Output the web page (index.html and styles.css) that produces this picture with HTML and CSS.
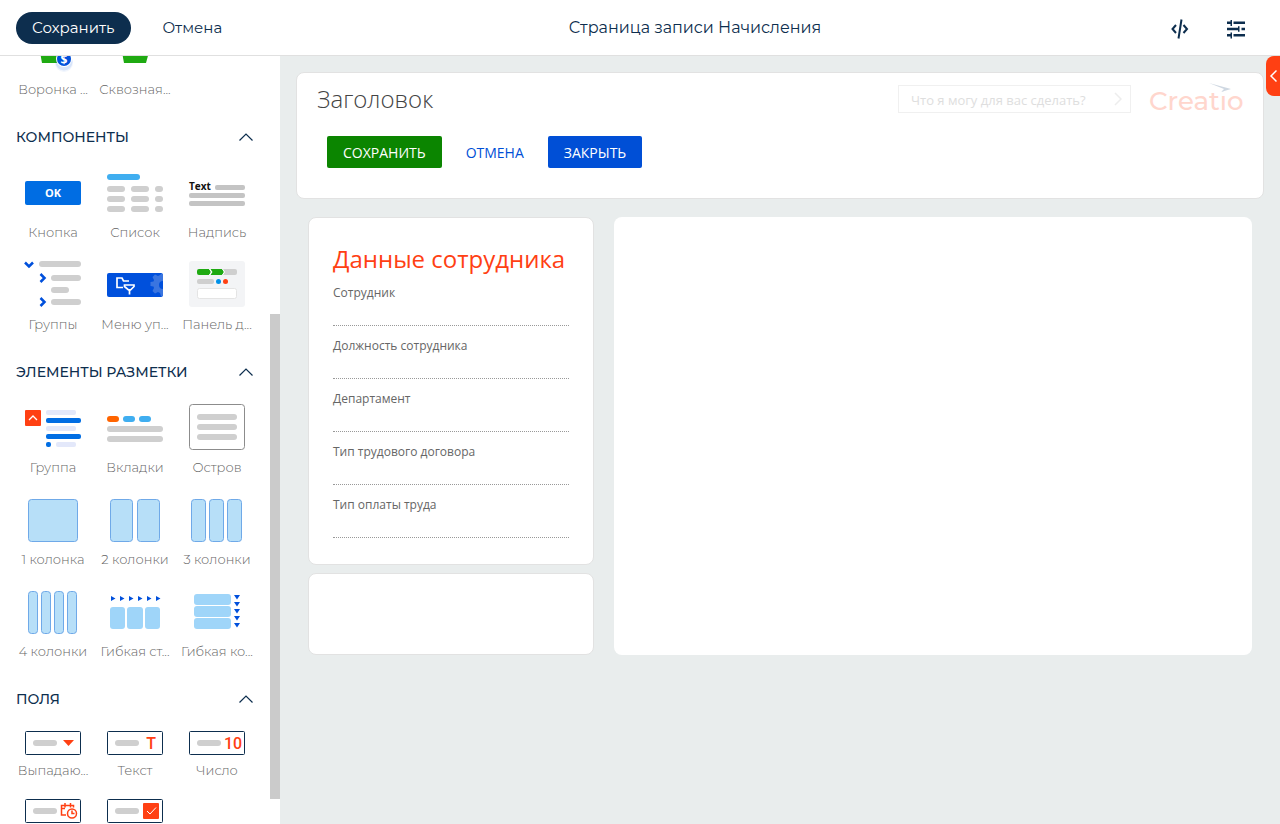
FILE: index.html
```html
<!DOCTYPE html>
<html lang="ru">
<head>
<meta charset="utf-8">
<title>Страница записи Начисления</title>
<link rel="stylesheet" href="styles.css">
</head>
<body>
<header class="topbar">
  <button class="btn-save" type="button">Сохранить</button>
  <button class="btn-cancel" type="button">Отмена</button>
  <h1 class="topbar-title">Страница записи Начисления</h1>
  <div class="topbar-tools">
    <button class="tool" type="button" aria-label="Исходный код">
      <svg width="20" height="22" viewBox="0 0 20 22" fill="none" stroke="#0d2e4e" stroke-width="2"><path d="M6 8 2.500 12 6 16M13.500 8l3.500 4L13.500 16M11.500 2.500l-3 19"/></svg>
    </button>
    <button class="tool" type="button" aria-label="Настройки">
      <svg width="20" height="22" viewBox="0 0 20 22" fill="#0d2e4e"><path d="M1 4.500h3.500V3H6v6H4.500V7H1zM7.500 4.500H19V7H7.500zM1 10.800h11V9.200h1.500v5.600h-1.500v-1.500H1zM15.500 10.800H19v2.500h-3.500zM1 17h3.500v-1.500H6v6H4.500v-2H1zM7.500 17H19v2.500H7.500z"/></svg>
    </button>
  </div>
</header>
<div class="workspace">
  <aside class="palette">
    <div class="tiles">
      <div class="tile"><svg class="icon-cut" viewBox="0 30 56 16"><path d="M15 26h27l-3 11H17z" fill="#1faa12"/><circle cx="39" cy="37" r="9" fill="#0050dc" opacity=".06"/><circle cx="39" cy="36" r="8.500" fill="#0050dc" opacity=".1"/><circle cx="39" cy="33" r="8" fill="#fff"/><circle cx="39" cy="33" r="7" fill="#0050dc"/><text class="g-dollar" x="39" y="38">$</text></svg><span class="tile-label">Воронка ...</span></div>
      <div class="tile"><svg class="icon-cut" viewBox="0 30 56 16"><path d="M15 26h27l-3 11H17z" fill="#1faa12"/></svg><span class="tile-label">Сквозная...</span></div>
    </div>

    <button class="section" type="button">КОМПОНЕНТЫ<svg class="chev" viewBox="0 0 14 8"><path d="M.5 7.500 7 1l6.500 6.500"/></svg></button>
    <div class="tiles">
      <div class="tile"><svg class="icon" viewBox="0 0 56 46"><rect y="12" width="56" height="24" rx="2" fill="#006de3"/><text class="g-ok" x="28" y="28">OK</text></svg><span class="tile-label">Кнопка</span></div>
      <div class="tile"><svg class="icon" viewBox="0 0 56 46" fill="#cfcfcf"><rect y="5" width="33" height="6" rx="3" fill="#40aef0"/><rect y="17" width="18" height="6" rx="3"/><rect x="24" y="17" width="18" height="6" rx="3"/><rect x="48" y="17" width="8" height="6" rx="3"/><rect y="27" width="18" height="6" rx="3"/><rect x="24" y="27" width="18" height="6" rx="3"/><rect x="48" y="27" width="8" height="6" rx="3"/><rect y="37" width="18" height="6" rx="3"/><rect x="24" y="37" width="18" height="6" rx="3"/><rect x="48" y="37" width="8" height="6" rx="3"/></svg><span class="tile-label">Список</span></div>
      <div class="tile"><svg class="icon" viewBox="0 0 56 46" fill="#c4c4c4"><text class="g-text" x="0" y="21">Text</text><rect x="26" y="16" width="30" height="5" rx="2"/><rect y="24" width="56" height="5" rx="2"/><rect y="32" width="56" height="5" rx="2"/></svg><span class="tile-label">Надпись</span></div>
      <div class="tile"><svg class="icon" viewBox="0 0 56 46" fill="#cfcfcf"><rect x="14" width="42" height="6" rx="3"/><rect x="26" y="14" width="30" height="6" rx="3"/><rect x="26" y="26" width="18" height="6" rx="3"/><rect x="26" y="38" width="30" height="6" rx="3"/><path d="M0 1.500 4 5.500 8 1.500M15.500 13l4 4-4 4M15.500 37l4 4-4 4" fill="none" stroke="#0050dc" stroke-width="2.500"/></svg><span class="tile-label">Группы</span></div>
      <div class="tile"><svg class="icon" viewBox="0 0 56 46"><rect y="12" width="56" height="24" rx="2" fill="#0050dc"/><path d="M54 13h2v7a4 4 0 0 0 0 8v7h-2l-1-3-2-1-3 1.500-2.500-2.500 1.500-3-.5-1.500-3-.5v-4l3-.5.5-1.500-1.500-3 2.500-2.500 3 1.500 2-1z" fill="#3a75e0"/><path d="M16 26.500h-6v-9.500h5l1.500 3h5.500M17.500 24h9.500v1.500l-3.500 3.500h-2L17.500 25.500zM22.500 28v5.500" fill="none" stroke="#fff" stroke-width="1.700"/></svg><span class="tile-label">Меню уп...</span></div>
      <div class="tile"><svg class="icon" viewBox="0 0 56 46"><rect width="56" height="46" rx="3" fill="#f3f4f6"/><path d="M32 8h14a2 2 0 0 1 2 2v2a2 2 0 0 1-2 2H32z" fill="#cfcfcf"/><path d="M10 8h10l2 3-2 3H10a2 2 0 0 1-2-2v-2a2 2 0 0 1 2-2zM21.500 8H33l2 3-2 3H21.500l2-3z" fill="#1faa12"/><path d="m20.500 8 2 3-2 3M33.500 8l2 3-2 3" fill="none" stroke="#fff"/><rect x="8" y="18" width="17" height="5" rx="2" fill="#cfcfcf"/><circle cx="29.500" cy="20.500" r="2.500" fill="#0091e8"/><circle cx="36.500" cy="20.500" r="2.500" fill="#ff4013"/><rect x="8.500" y="27.500" width="39" height="10" rx="2" fill="#fff" stroke="#e4e4e4"/></svg><span class="tile-label">Панель д...</span></div>
    </div>

    <button class="section" type="button">ЭЛЕМЕНТЫ РАЗМЕТКИ<svg class="chev" viewBox="0 0 14 8"><path d="M.5 7.500 7 1l6.500 6.500"/></svg></button>
    <div class="tiles">
      <div class="tile"><svg class="icon" viewBox="0 0 56 46"><rect y="6" width="16" height="16" rx="1" fill="#ff4013"/><path d="m4 16 4-4 4 4" fill="none" stroke="#fff" stroke-width="1.300"/><g fill="#e3e8fa"><rect x="21" y="6" width="30" height="5" rx="2"/><rect x="21" y="22" width="30" height="5" rx="2"/><rect x="31" y="38" width="20" height="5" rx="2"/></g><g fill="#006de3"><rect x="21" y="14" width="35" height="5" rx="2"/><rect x="21" y="30" width="35" height="5" rx="2"/><rect x="21" y="38" width="5" height="5" rx="2"/></g></svg><span class="tile-label">Группа</span></div>
      <div class="tile"><svg class="icon" viewBox="0 0 56 46"><rect y="12" width="12" height="6" rx="3" fill="#ff6400"/><rect x="16" y="12" width="12" height="6" rx="3" fill="#40aef0"/><rect x="32" y="12" width="12" height="6" rx="3" fill="#40aef0"/><rect y="22" width="56" height="6" rx="3" fill="#cfcfcf"/><rect y="32" width="56" height="6" rx="3" fill="#cfcfcf"/></svg><span class="tile-label">Вкладки</span></div>
      <div class="tile"><svg class="icon" viewBox="0 0 56 46" fill="#cfcfcf"><rect x=".5" y=".5" width="55" height="45" rx="3" fill="#fff" stroke="#8c8c8c"/><rect x="8" y="10" width="40" height="6" rx="3"/><rect x="8" y="20" width="40" height="6" rx="3"/><rect x="8" y="30" width="40" height="6" rx="3"/></svg><span class="tile-label">Остров</span></div>
      <div class="tile"><svg class="icon cols" viewBox="0 0 56 46"><rect x="3.500" y="3.500" width="49" height="42" rx="3"/></svg><span class="tile-label">1 колонка</span></div>
      <div class="tile"><svg class="icon cols" viewBox="0 0 56 46"><rect x="3.500" y="3.500" width="22" height="42" rx="3"/><rect x="30.500" y="3.500" width="22" height="42" rx="3"/></svg><span class="tile-label">2 колонки</span></div>
      <div class="tile"><svg class="icon cols" viewBox="0 0 56 46"><rect x="2.500" y="3.500" width="14" height="42" rx="3"/><rect x="20.500" y="3.500" width="14" height="42" rx="3"/><rect x="38.500" y="3.500" width="14" height="42" rx="3"/></svg><span class="tile-label">3 колонки</span></div>
      <div class="tile"><svg class="icon cols" viewBox="0 0 56 46"><rect x="3.500" y="3.500" width="9" height="42" rx="3"/><rect x="16.500" y="3.500" width="9" height="42" rx="3"/><rect x="29.500" y="3.500" width="9" height="42" rx="3"/><rect x="42.500" y="3.500" width="9" height="42" rx="3"/></svg><span class="tile-label">4 колонки</span></div>
      <div class="tile"><svg class="icon" viewBox="0 0 56 46"><path fill="#0050dc" d="M4 8l4.500 2.500-4.500 2.500zM13 8l4.500 2.500-4.500 2.500zM22 8l4.500 2.500-4.500 2.500zM31 8l4.500 2.500-4.500 2.500zM40 8l4.500 2.500-4.500 2.500zM49 8l4.500 2.500-4.500 2.500z"/><g fill="#9fd5f9"><rect x="3" y="19" width="15" height="22" rx="3"/><rect x="20" y="19" width="16" height="22" rx="3"/><rect x="38" y="19" width="15" height="22" rx="3"/></g></svg><span class="tile-label">Гибкая ст...</span></div>
      <div class="tile"><svg class="icon" viewBox="0 0 56 46"><g fill="#9fd5f9"><rect x="5" y="6" width="37" height="11" rx="3"/><rect x="5" y="18" width="37" height="11" rx="3"/><rect x="5" y="30" width="37" height="11" rx="3"/></g><path fill="#0050dc" d="M45 7h6l-3 4.500zM45 14h6l-3 4.500zM45 21h6l-3 4.500zM45 28h6l-3 4.500zM45 35h6l-3 4.500z"/></svg><span class="tile-label">Гибкая ко...</span></div>
    </div>

    <button class="section" type="button">ПОЛЯ<svg class="chev" viewBox="0 0 14 8"><path d="M.5 7.500 7 1l6.500 6.500"/></svg></button>
    <div class="tiles fields">
      <div class="tile"><svg class="icon-field" viewBox="0 0 56 24"><rect class="frame" x=".5" y=".5" width="55" height="23" rx="1"/><rect x="8" y="9" width="24" height="6" rx="3" fill="#cfcfcf"/><path d="M38 9h11l-5.500 6z" fill="#ff4013"/></svg><span class="tile-label">Выпадаю...</span></div>
      <div class="tile"><svg class="icon-field" viewBox="0 0 56 24"><rect class="frame" x=".5" y=".5" width="55" height="23" rx="1"/><rect x="8" y="9" width="24" height="6" rx="3" fill="#cfcfcf"/><text class="g-red" x="44" y="18">T</text></svg><span class="tile-label">Текст</span></div>
      <div class="tile"><svg class="icon-field" viewBox="0 0 56 24"><rect class="frame" x=".5" y=".5" width="55" height="23" rx="1"/><rect x="8" y="9" width="24" height="6" rx="3" fill="#cfcfcf"/><text class="g-red" x="44" y="18">10</text></svg><span class="tile-label">Число</span></div>
      <div class="tile"><svg class="icon-field" viewBox="0 0 56 24"><rect class="frame" x=".5" y=".5" width="55" height="23" rx="1"/><rect x="8" y="9" width="24" height="6" rx="3" fill="#cfcfcf"/><g fill="none" stroke="#ff4013" stroke-width="1.500"><path d="M41 16h-4.500V6.500h12v2M36 9.500h4M40 4v4.500M45.500 4v4.500"/><circle cx="47" cy="14.500" r="4.500"/><path d="M47 11.500v3h2.500"/></g></svg></div>
      <div class="tile"><svg class="icon-field" viewBox="0 0 56 24"><rect class="frame" x=".5" y=".5" width="55" height="23" rx="1"/><rect x="8" y="9" width="24" height="6" rx="3" fill="#cfcfcf"/><rect x="36" y="4" width="16" height="16" rx="1" fill="#ff4013"/><path d="m40 12 3 3 6-6.500" fill="none" stroke="#fff"/></svg></div>
    </div>
    <div class="scroll-thumb"></div>
  </aside>

  <main class="canvas">
    <section class="card page-head">
      <div class="page-head-top">
        <h2 class="page-title">Заголовок</h2>
        <form class="ask">
          <input class="ask-input" type="text" aria-label="Поиск" placeholder="Что я могу для вас сделать?">
          <button class="ask-go" type="button" aria-label="Найти"><svg width="8" height="14" viewBox="0 0 8 14" fill="none" stroke="#ededed" stroke-width="1.500"><path d="m1 1 6 6-6 6"/></svg></button>
        </form>
        <svg class="logo" viewBox="0 0 94 28" role="img" aria-label="Creatio"><text class="logo-text" x="0" y="27">Creatıo</text><path d="M60 0 82 6l-10 3 3-3z" fill="#cfd8e2"/></svg>
      </div>
      <div class="actions">
        <button class="action green" type="button">СОХРАНИТЬ</button>
        <button class="action plain" type="button">ОТМЕНА</button>
        <button class="action blue" type="button">ЗАКРЫТЬ</button>
      </div>
    </section>
    <div class="columns">
      <div class="side">
        <section class="card profile">
          <h2 class="profile-title">Данные сотрудника</h2>
          <label class="field">Сотрудник<input type="text"></label>
          <label class="field">Должность сотрудника<input type="text"></label>
          <label class="field">Департамент<input type="text"></label>
          <label class="field">Тип трудового договора<input type="text"></label>
          <label class="field">Тип оплаты труда<input type="text"></label>
        </section>
        <section class="card blank"></section>
      </div>
      <section class="content"></section>
    </div>
    <button class="drawer" type="button" aria-label="Открыть панель"><svg width="8" height="14" viewBox="0 0 8 14" fill="none" stroke="#fff" stroke-width="1.500"><path d="M7.500 1.500 2 7l5.500 5.500"/></svg></button>
  </main>
</div>
</body>
</html>
```
FILE: styles.css
```css
* { box-sizing: border-box; }
body {
  margin: 0;
  height: 100vh;
  display: flex;
  flex-direction: column;
  overflow: hidden;
  background: #fff;
  font-family: "Open Sans", sans-serif;
}
button { border: 0; background: none; padding: 0; font: inherit; cursor: pointer; }
h1, h2 { margin: 0; }
svg { display: block; }

.topbar {
  flex: none;
  display: flex;
  align-items: center;
  height: 56px;
  padding: 0 28px 0 16px;
  border-bottom: 1px solid #e0e0e0;
  color: #0d2e4e;
  font-family: Montserrat, Inter, sans-serif;
  font-size: 15px;
}
.btn-save {
  height: 32px;
  padding: 0 16px;
  border-radius: 16px;
  background: #0d2e4e;
  color: #fff;
}
.btn-cancel { height: 32px; padding: 0 16px; margin-left: 16px; color: #0d2e4e; }
.topbar-title { flex: 1; text-align: center; font-size: 16px; font-weight: 400; }
.topbar-tools { display: flex; gap: 24px; padding-left: 12px; }
.tool { display: grid; place-items: center; width: 32px; height: 32px; }

.workspace { flex: 1; min-height: 0; display: flex; }

.palette {
  position: relative;
  flex: none;
  width: 280px;
  padding-left: 12px;
  overflow: hidden;
  background: #fff;
  font-family: Montserrat, Inter, sans-serif;
}
.scroll-thumb { position: absolute; top: 258px; right: 0; width: 10px; height: 485px; background: #cbcbcb; }
.tiles { display: grid; grid-template-columns: repeat(3, 82px); row-gap: 19px; }
.tile { display: flex; flex-direction: column; align-items: center; gap: 7px; min-width: 0; }
.fields .tile { gap: 5px; }
.tile-label {
  white-space: nowrap;
  color: #666;
  font-size: 13px;
  font-weight: 300;
  line-height: 20px;
}
.icon { width: 56px; height: 46px; overflow: visible; }
.icon-cut { width: 56px; height: 16px; overflow: hidden; }
.icon-field { width: 56px; height: 24px; }
.cols rect { fill: #b7dff8; stroke: #6fa9e8; }
.frame { fill: #fff; stroke: #0d2e4e; }
.section {
  display: flex;
  align-items: center;
  justify-content: space-between;
  width: 241px;
  height: 40px;
  margin: 18px 0 12px;
  padding-left: 4px;
  color: #0d2e4e;
  font-size: 14px;
  font-weight: 500;
}
.chev { width: 14px; height: 8px; fill: none; stroke: #0d2e4e; stroke-width: 1.2; }
.g-ok, .g-dollar, .g-red { text-anchor: middle; font-family: "Open Sans", sans-serif; font-weight: 700; }
.g-ok { font-size: 11px; fill: #fff; }
.g-dollar { font-size: 12px; fill: #fff; }
.g-text { font: 700 10px "Open Sans", sans-serif; fill: #111; }
.g-red { font-family: Roboto, sans-serif; font-weight: 500; font-size: 16px; fill: #ff4013; }

.canvas { position: relative; flex: 1; min-width: 0; padding: 16px; background: #e9eded; }
.card { background: #fff; border: 1px solid #e2e2e2; border-radius: 8px; }
.page-head { height: 127px; padding: 10px 20px; }
.page-head-top { display: flex; align-items: flex-start; height: 34px; }
.page-title { flex: 1; color: #444; font-size: 24px; font-weight: 300; line-height: 32px; }
.ask { display: flex; align-items: center; width: 233px; height: 28px; margin: 2px 18px 0 0; border: 1px solid #f0f0f0; }
.ask-input { flex: 1; min-width: 0; border: 0; padding: 2px 12px 0; background: none; font: 13px "Open Sans", sans-serif; }
.ask-input::placeholder { color: #dedede; opacity: 1; }
.ask-go { padding-right: 8px; }
.logo { width: 94px; height: 28px; overflow: visible; }
.logo-text { font: 500 26px Montserrat, Lato, sans-serif; fill: #ffd6cd; }
.actions { display: flex; gap: 8px; padding: 19px 10px; }
.action { height: 32px; padding: 0 16px; border-radius: 2px; color: #fff; font-size: 14px; }
.green { background: #0b8500; }
.blue { background: #004fd6; }
.plain { color: #004fd6; }

.columns { display: grid; grid-template-columns: 286px 1fr; gap: 20px; padding: 18px 12px; }
.side { display: flex; flex-direction: column; gap: 8px; }
.profile { padding: 24px 24px 26px; }
.profile-title { padding-bottom: 9px; color: #ff4013; font-size: 24px; font-weight: 400; line-height: 34px; white-space: nowrap; }
.field { display: block; color: #666; font-size: 12px; line-height: 16px; }
.field + .field { margin-top: 12px; }
.field input {
  display: block;
  width: 100%;
  height: 25px;
  border: 0;
  border-bottom: 1px dotted #999;
  padding: 0;
  background: none;
  font: inherit;
}
.blank { height: 82px; }
.content { border-radius: 8px; background: #fff; }
.drawer {
  position: absolute;
  top: 0;
  right: 0;
  display: grid;
  place-items: center;
  width: 14px;
  height: 40px;
  border-radius: 8px 0 0 8px;
  background: #ff4013;
}
```
